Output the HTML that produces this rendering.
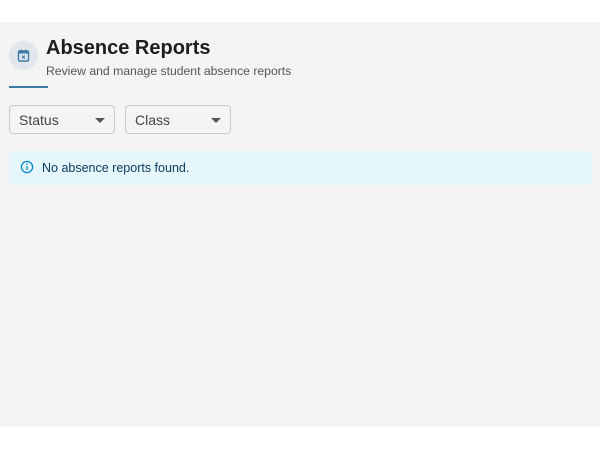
<!DOCTYPE html>
<html><head><style>
body{margin:0;width:600px;height:450px;background:#fff;font-family:"Liberation Sans",sans-serif;position:relative;overflow:hidden}
.bg{position:absolute;left:0;top:22px;width:600px;height:405px;background:#f4f4f4}
.ic{position:absolute;left:9px;top:41px;width:29px;height:29px;border-radius:50%;background:#e1e7ec}
h1{position:absolute;left:46px;top:37px;margin:0;font-size:20px;font-weight:bold;color:#1d1d1d}
.sub{position:absolute;left:46px;top:64px;font-size:12.2px;color:#555}
.ul{position:absolute;left:9px;top:86px;width:39px;height:2px;background:#3b7aa5}
.sel{position:absolute;top:105px;height:29px;border:1px solid #c8c8c8;border-radius:4px;font-size:14px;color:#444;line-height:29px;box-sizing:border-box;padding-left:9px}
.sel:after{content:"";position:absolute;right:9px;top:12px;border-left:5px solid transparent;border-right:5px solid transparent;border-top:5px solid #555}
.al{position:absolute;left:9px;top:151px;width:583px;height:34px;background:#e5f6fd;border-radius:4px;font-size:12.5px;color:#0d3c61;line-height:34px}
</style></head><body>
<div class="bg"></div>
<div class="ic"><svg width="29" height="29" viewBox="0 0 29 29"><rect x="9.5" y="10" width="10" height="10" rx="1" fill="none" stroke="#3b7aa5" stroke-width="1.4"/><rect x="9.5" y="10" width="10" height="2.5" fill="#3b7aa5"/><line x1="12" y1="8.5" x2="12" y2="10.5" stroke="#3b7aa5" stroke-width="1.2"/><line x1="17" y1="8.5" x2="17" y2="10.5" stroke="#3b7aa5" stroke-width="1.2"/><path d="M13 14.5l3 3M16 14.5l-3 3" stroke="#3b7aa5" stroke-width="1.1"/></svg></div>
<h1>Absence Reports</h1>
<div class="sub">Review and manage student absence reports</div>
<div class="ul"></div>
<div class="sel" style="left:9px;width:106px">Status</div>
<div class="sel" style="left:125px;width:106px">Class</div>
<div class="al"><svg style="position:absolute;left:11px;top:9px" width="14" height="14" viewBox="0 0 14 14"><circle cx="7" cy="7" r="5.6" fill="none" stroke="#0288d1" stroke-width="1.3"/><line x1="7" y1="6" x2="7" y2="10" stroke="#0288d1" stroke-width="1.3"/><circle cx="7" cy="4.2" r=".8" fill="#0288d1"/></svg><span style="position:absolute;left:33px">No absence reports found.</span></div>
</body></html>
